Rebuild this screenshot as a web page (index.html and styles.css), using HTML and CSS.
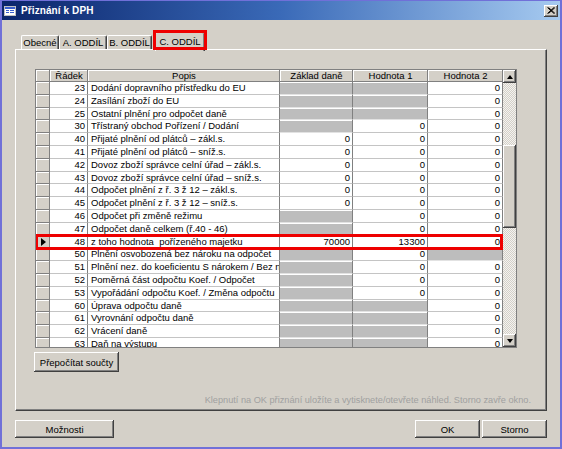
FILE: index.html
```html
<!DOCTYPE html>
<html lang="cs">
<head>
<meta charset="utf-8">
<title>Přiznání k DPH</title>
<link rel="stylesheet" href="styles.css">
</head>
<body>
<div class="window">
  <div class="titlebar">
    <svg class="ticon" width="12" height="10" viewBox="0 0 12 10">
      <rect x="0.5" y="0.5" width="11" height="9" fill="#fff" stroke="#c0c0c0"/>
      <rect x="1" y="1" width="10" height="2" fill="#3a5fcd"/>
      <rect x="2" y="4" width="3" height="1" fill="#3a5fcd"/>
      <rect x="6" y="4" width="4" height="1" fill="#3a5fcd"/>
      <rect x="2" y="6" width="3" height="1" fill="#3a5fcd"/>
      <rect x="6" y="6" width="4" height="1" fill="#3a5fcd"/>
    </svg>
    <span class="title">Přiznání k DPH</span>
    <div class="close">
      <svg width="8" height="7" viewBox="0 0 8 7"><path d="M0.5 0.5 L7 6.5 M1.5 0.5 L8 6.5 M7 0.5 L0.5 6.5 M8 0.5 L1.5 6.5" stroke="#000" stroke-width="1"/></svg>
    </div>
  </div>

  <div class="tabs">
    <div class="tab t1">Obecné</div>
    <div class="tab t2">A. ODDÍL</div>
    <div class="tab t3">B. ODDÍL</div>
    <div class="tab active">C. ODDÍL</div>
  </div>

  <div class="panel">
    <div class="gridwrap">
      <div class="grid">
        <div class="row head">
          <div class="c sel"></div>
          <div class="c">Řádek</div>
          <div class="c">Popis</div>
          <div class="c">Základ daně</div>
          <div class="c">Hodnota 1</div>
          <div class="c">Hodnota 2</div>
        </div>
        <div class="row"><div class="c sel"></div><div class="c num">23</div><div class="c txt">Dodání dopravního přístředku do EU</div><div class="c g"></div><div class="c g"></div><div class="c v">0</div></div>
        <div class="row"><div class="c sel"></div><div class="c num">24</div><div class="c txt">Zasílání zboží do EU</div><div class="c g"></div><div class="c g"></div><div class="c v">0</div></div>
        <div class="row"><div class="c sel"></div><div class="c num">25</div><div class="c txt">Ostatní plnění pro odpočet daně</div><div class="c g"></div><div class="c g"></div><div class="c v">0</div></div>
        <div class="row"><div class="c sel"></div><div class="c num">30</div><div class="c txt">Třístraný obchod Pořízení / Dodání</div><div class="c g"></div><div class="c v">0</div><div class="c v">0</div></div>
        <div class="row"><div class="c sel"></div><div class="c num">40</div><div class="c txt">Přijaté plnění od plátců – zákl.s.</div><div class="c v">0</div><div class="c v">0</div><div class="c v">0</div></div>
        <div class="row"><div class="c sel"></div><div class="c num">41</div><div class="c txt">Přijaté plnění od plátců – sníž.s.</div><div class="c v">0</div><div class="c v">0</div><div class="c v">0</div></div>
        <div class="row"><div class="c sel"></div><div class="c num">42</div><div class="c txt">Dovoz zboží správce celní úřad – zákl.s.</div><div class="c v">0</div><div class="c v">0</div><div class="c v">0</div></div>
        <div class="row"><div class="c sel"></div><div class="c num">43</div><div class="c txt">Dovoz zboží správce celní úřad – sníž.s.</div><div class="c v">0</div><div class="c v">0</div><div class="c v">0</div></div>
        <div class="row"><div class="c sel"></div><div class="c num">44</div><div class="c txt">Odpočet plnění z ř. 3 ž 12 – zákl.s.</div><div class="c v">0</div><div class="c v">0</div><div class="c v">0</div></div>
        <div class="row"><div class="c sel"></div><div class="c num">45</div><div class="c txt">Odpočet plnění z ř. 3 ž 12 – sníž.s.</div><div class="c v">0</div><div class="c v">0</div><div class="c v">0</div></div>
        <div class="row"><div class="c sel"></div><div class="c num">46</div><div class="c txt">Odpočet při změně režimu</div><div class="c g"></div><div class="c v">0</div><div class="c v">0</div></div>
        <div class="row"><div class="c sel"></div><div class="c num">47</div><div class="c txt">Odpočet daně celkem (ř.40 - 46)</div><div class="c g"></div><div class="c v">0</div><div class="c v">0</div></div>
        <div class="row current"><div class="c sel"><span class="arrow"></span></div><div class="c num">48</div><div class="c txt">z toho hodnota&nbsp; pořízeného majetku</div><div class="c v">70000</div><div class="c v">13300</div><div class="c v">0</div></div>
        <div class="row"><div class="c sel"></div><div class="c num">50</div><div class="c txt">Plnění osvobozená bez nároku na odpočet</div><div class="c g"></div><div class="c v">0</div><div class="c g"></div></div>
        <div class="row"><div class="c sel"></div><div class="c num">51</div><div class="c txt">Plnění nez. do koeficientu S nárokem / Bez nároku</div><div class="c g"></div><div class="c v">0</div><div class="c v">0</div></div>
        <div class="row"><div class="c sel"></div><div class="c num">52</div><div class="c txt">Poměrná část odpočtu Koef. / Odpočet</div><div class="c g"></div><div class="c v">0</div><div class="c v">0</div></div>
        <div class="row"><div class="c sel"></div><div class="c num">53</div><div class="c txt">Vypořádání odpočtu Koef. / Změna odpočtu</div><div class="c g"></div><div class="c v">0</div><div class="c v">0</div></div>
        <div class="row"><div class="c sel"></div><div class="c num">60</div><div class="c txt">Úprava odpočtu daně</div><div class="c g"></div><div class="c g"></div><div class="c v">0</div></div>
        <div class="row"><div class="c sel"></div><div class="c num">61</div><div class="c txt">Vyrovnání odpočtu daně</div><div class="c g"></div><div class="c g"></div><div class="c v">0</div></div>
        <div class="row"><div class="c sel"></div><div class="c num">62</div><div class="c txt">Vrácení daně</div><div class="c g"></div><div class="c g"></div><div class="c v">0</div></div>
        <div class="row"><div class="c sel"></div><div class="c num">63</div><div class="c txt">Daň na výstupu</div><div class="c g"></div><div class="c g"></div><div class="c v">0</div></div>
      </div>
      <div class="vscroll">
        <div class="sbtn"><span class="up"></span></div>
        <div class="track t-top"></div>
        <div class="thumb"></div>
        <div class="track t-bot"></div>
        <div class="sbtn"><span class="down"></span></div>
      </div>
    </div>
    <div class="btn recalc">Přepočítat součty</div>
    <div class="note">Klepnutí na OK přiznání uložíte a vytisknete/otevřete náhled. Storno zavře okno.</div>
  </div>

  <div class="footer">
    <div class="btn opts">Možnosti</div>
    <div class="spacer"></div>
    <div class="btn ok">OK</div>
    <div class="btn cancel">Storno</div>
  </div>
</div>
</body>
</html>
```

FILE: styles.css
```css
html, body {
  margin: 0;
  padding: 0;
  background: #d4d0c8;
}

.window {
  width: 562px;
  height: 449px;
  box-sizing: border-box;
  border: 2px solid #7070d8;
  border-top-width: 1px;
  background: #d4d0c8;
  display: flex;
  flex-direction: column;
  font-family: "Liberation Sans", Arial, sans-serif;
  font-size: 9.5px;
  color: #000;
  overflow: hidden;
}

/* title bar */
.titlebar {
  height: 19px;
  flex: none;
  display: flex;
  align-items: center;
  background: linear-gradient(to right, #0a246a 0%, #3a6ab8 50%, #a6caf0 100%);
  padding-left: 2px;
}
.ticon {
  flex: none;
  margin-right: 5px;
}
.title {
  color: #fff;
  font-weight: bold;
  font-size: 10px;
  letter-spacing: 0.1px;
}
.close {
  margin-left: auto;
  margin-right: 2px;
  width: 14px;
  height: 12px;
  background: #d4d0c8;
  box-shadow: inset -1px -1px #404040, inset 1px 1px #fff, inset -2px -2px #808080;
  display: flex;
  align-items: center;
  justify-content: center;
}

/* tabs */
.tabs {
  flex: none;
  height: 17px;
  margin-top: 12px;
  margin-left: 19px;
  display: flex;
  align-items: flex-end;
  position: relative;
  z-index: 2;
}
.tab {
  height: 14px;
  box-sizing: border-box;
  border-top: 1px solid #fff;
  border-left: 1px solid #fff;
  border-right: 1px solid #404040;
  box-shadow: inset -1px 0 #808080;
  border-radius: 2px 2px 0 0;
  display: flex;
  align-items: center;
  justify-content: center;
  white-space: nowrap;
  font-size: 9.5px;
}
.t1 { width: 38px; }
.t2 { width: 48px; }
.t3 { width: 45px; }
.tab.active {
  width: 50px;
  height: 19px;
  margin-left: 3px;
  margin-bottom: -2px;
  background: #d4d0c8;
  padding-bottom: 2px;
  position: relative;
}
.tab.active::after {
  content: "";
  position: absolute;
  left: -3px;
  right: -3px;
  top: -3px;
  bottom: 1px;
  border: 3px solid #ee0000;
}

/* panel */
.panel {
  flex: none;
  margin-left: 13px;
  width: 532px;
  height: 362px;
  box-sizing: border-box;
  border-top: 1px solid #fff;
  border-left: 1px solid #fff;
  border-right: 1px solid #404040;
  border-bottom: 1px solid #404040;
  box-shadow: inset -1px -1px #808080;
  padding: 19px 0 0 19px;
  display: flex;
  flex-direction: column;
  align-items: flex-start;
}

.gridwrap {
  width: 482px;
  height: 279px;
  box-sizing: border-box;
  border: 1px solid #808080;
  display: flex;
  background: #fff;
}
.grid {
  width: 467px;
  overflow: hidden;
  flex: none;
}
.row {
  display: grid;
  grid-template-columns: 14px 38px 192px 73px 75px 75px;
  height: 12.8px;
  position: relative;
}
.row.head {
  height: 12px;
}
.c {
  box-sizing: border-box;
  border-right: 1px solid #808080;
  border-bottom: 1px solid #c4c4c4;
  overflow: hidden;
  white-space: nowrap;
  line-height: 11.5px;
}
.head .c {
  background: #d4d0c8;
  border: none;
  box-shadow: inset -1px -1px #808080, inset 1px 1px #fff;
  text-align: center;
  line-height: 12px;
}
.c.sel {
  background: #d4d0c8;
  border: none;
  box-shadow: inset -1px -1px #808080, inset 1px 1px #fff;
  display: flex;
  align-items: center;
  justify-content: center;
}
.arrow {
  width: 0;
  height: 0;
  border-left: 5px solid #000;
  border-top: 4px solid transparent;
  border-bottom: 4px solid transparent;
  margin-left: 1px;
}
.num {
  text-align: right;
  padding-right: 2px;
}
.txt {
  padding-left: 3px;
}
.v {
  text-align: right;
  padding-right: 2px;
}
.g {
  background: #bdbdbd;
  box-shadow: inset 0 1px #fff;
  border-bottom-color: #e2e2e2;
}
.row.current::after {
  content: "";
  position: absolute;
  left: -1px;
  right: 0;
  top: -2px;
  bottom: -2px;
  border: 3px solid #ee0000;
  z-index: 1;
}

/* scrollbar */
.vscroll {
  width: 13px;
  flex: none;
  display: flex;
  flex-direction: column;
}
.sbtn {
  height: 13px;
  flex: none;
  background: #d4d0c8;
  box-shadow: inset -1px -1px #404040, inset 1px 1px #fff, inset -2px -2px #808080;
  display: flex;
  align-items: center;
  justify-content: center;
}
.up, .down {
  width: 0;
  height: 0;
  border-left: 3.5px solid transparent;
  border-right: 3.5px solid transparent;
}
.up { border-bottom: 4px solid #000; }
.down { border-top: 4px solid #000; }
.track {
  background: repeating-conic-gradient(#d4d0c8 0 25%, #f4f3f0 0 50%) 0 0 / 2px 2px;
}
.t-top { height: 62px; flex: none; }
.t-bot { flex: 1; }
.thumb {
  height: 83px;
  flex: none;
  background: #d4d0c8;
  box-shadow: inset -1px -1px #404040, inset 1px 1px #fff, inset -2px -2px #808080;
}

/* buttons */
.btn {
  box-sizing: border-box;
  background: #d4d0c8;
  box-shadow: inset -1px -1px #404040, inset 1px 1px #fff, inset -2px -2px #808080;
  display: flex;
  align-items: center;
  justify-content: center;
  white-space: nowrap;
}
.recalc {
  width: 85px;
  height: 20px;
  margin-top: 4px;
  margin-left: -1px;
}
.note {
  align-self: flex-end;
  margin-top: 23px;
  margin-right: 15px;
  color: #a0a0a0;
  font-size: 9.2px;
  white-space: nowrap;
}

.footer {
  flex: none;
  display: flex;
  margin-top: 9px;
  padding-left: 13px;
  padding-right: 13px;
  gap: 2px;
}
.spacer { flex: 1; }
.btn.opts { width: 99px; height: 18px; }
.btn.ok { width: 65px; height: 18px; }
.btn.cancel { width: 65px; height: 18px; }
```
